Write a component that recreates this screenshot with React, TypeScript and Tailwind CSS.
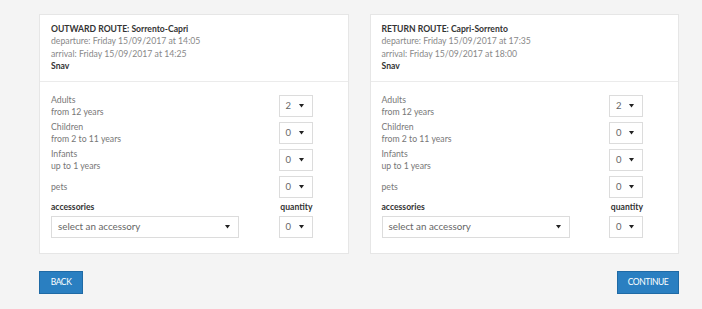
import React from "react";

const Caret = () => (
  <svg width="5" height="5" viewBox="0 0 5 5" className="shrink-0">
    <path d="M0 1 L5 1 L2.5 4.5 Z" fill="#222" />
  </svg>
);

const Sel = ({ v }: { v: string }) => (
  <div className="w-[34px] h-[22px] border border-[#dcdcdc] bg-white flex items-center justify-between pl-[6px] pr-[8px] text-[9.5px] text-[#666]">
    <span>{v}</span>
    <Caret />
  </div>
);

const Row = ({ a, b, v }: { a: string; b?: string; v: string }) => (
  <div className="flex items-center justify-between h-[22px]">
    <div className="leading-[12px] text-[8.7px] text-[#777]">
      <div>{a}</div>
      {b && <div>{b}</div>}
    </div>
    <Sel v={v} />
  </div>
);

const Card = ({ title, dep, arr }: { title: string; dep: string; arr: string }) => (
  <div className="flex-1 bg-white border border-[#e6e6e6]">
    <div className="px-[11px] pt-[8px] pb-[8px] border-b border-[#ebebeb] text-[8.7px] leading-[12.4px]">
      <div className="font-bold text-[#333] text-[8.6px]">{title}</div>
      <div className="text-[#888]">{dep}</div>
      <div className="text-[#888]">{arr}</div>
      <div className="font-bold text-[#333] text-[8.6px]">Snav</div>
    </div>
    <div className="pl-[11px] pr-[35px] pt-[13px] pb-[15px] flex flex-col gap-[5px]">
      <Row a="Adults" b="from 12 years" v="2" />
      <Row a="Children" b="from 2 to 11 years" v="0" />
      <Row a="Infants" b="up to 1 years" v="0" />
      <Row a="pets" v="0" />
      <div className="flex flex-col">
        <div className="flex justify-between text-[8.6px] font-bold text-[#333] leading-[12px] h-[12px] -mt-[2px]">
          <span>accessories</span>
          <span>quantity</span>
        </div>
        <div className="flex justify-between items-center mt-[3px]">
          <div className="w-[188px] h-[22px] border border-[#dcdcdc] bg-white flex items-center justify-between pl-[6px] pr-[8px] text-[9.8px] text-[#666]">
            <span>select an accessory</span>
            <Caret />
          </div>
          <Sel v="0" />
        </div>
      </div>
    </div>
  </div>
);

export default function App() {
  return (
    <div
      className="w-[702px] h-[309px] bg-[#f4f4f4] pl-[39px] pr-[23px] pt-[14px]"
      style={{ fontFamily: 'Lato, "Liberation Sans", sans-serif' }}
    >
      <div className="flex gap-[21px]">
        <Card
          title="OUTWARD ROUTE: Sorrento-Capri"
          dep="departure: Friday 15/09/2017 at 14:05"
          arr="arrival: Friday 15/09/2017 at 14:25"
        />
        <Card
          title="RETURN ROUTE: Capri-Sorrento"
          dep="departure: Friday 15/09/2017 at 17:35"
          arr="arrival: Friday 15/09/2017 at 18:00"
        />
      </div>
      <div className="flex justify-between mt-[17px]">
        <button className="h-[23px] w-[44px] bg-[#2a7fc1] border border-[#1f6aa5] text-white text-[8.5px] tracking-[-0.4px]">
          BACK
        </button>
        <button className="h-[23px] w-[62px] bg-[#2a7fc1] border border-[#1f6aa5] text-white text-[8.5px] tracking-[-0.4px]">
          CONTINUE
        </button>
      </div>
    </div>
  );
}
